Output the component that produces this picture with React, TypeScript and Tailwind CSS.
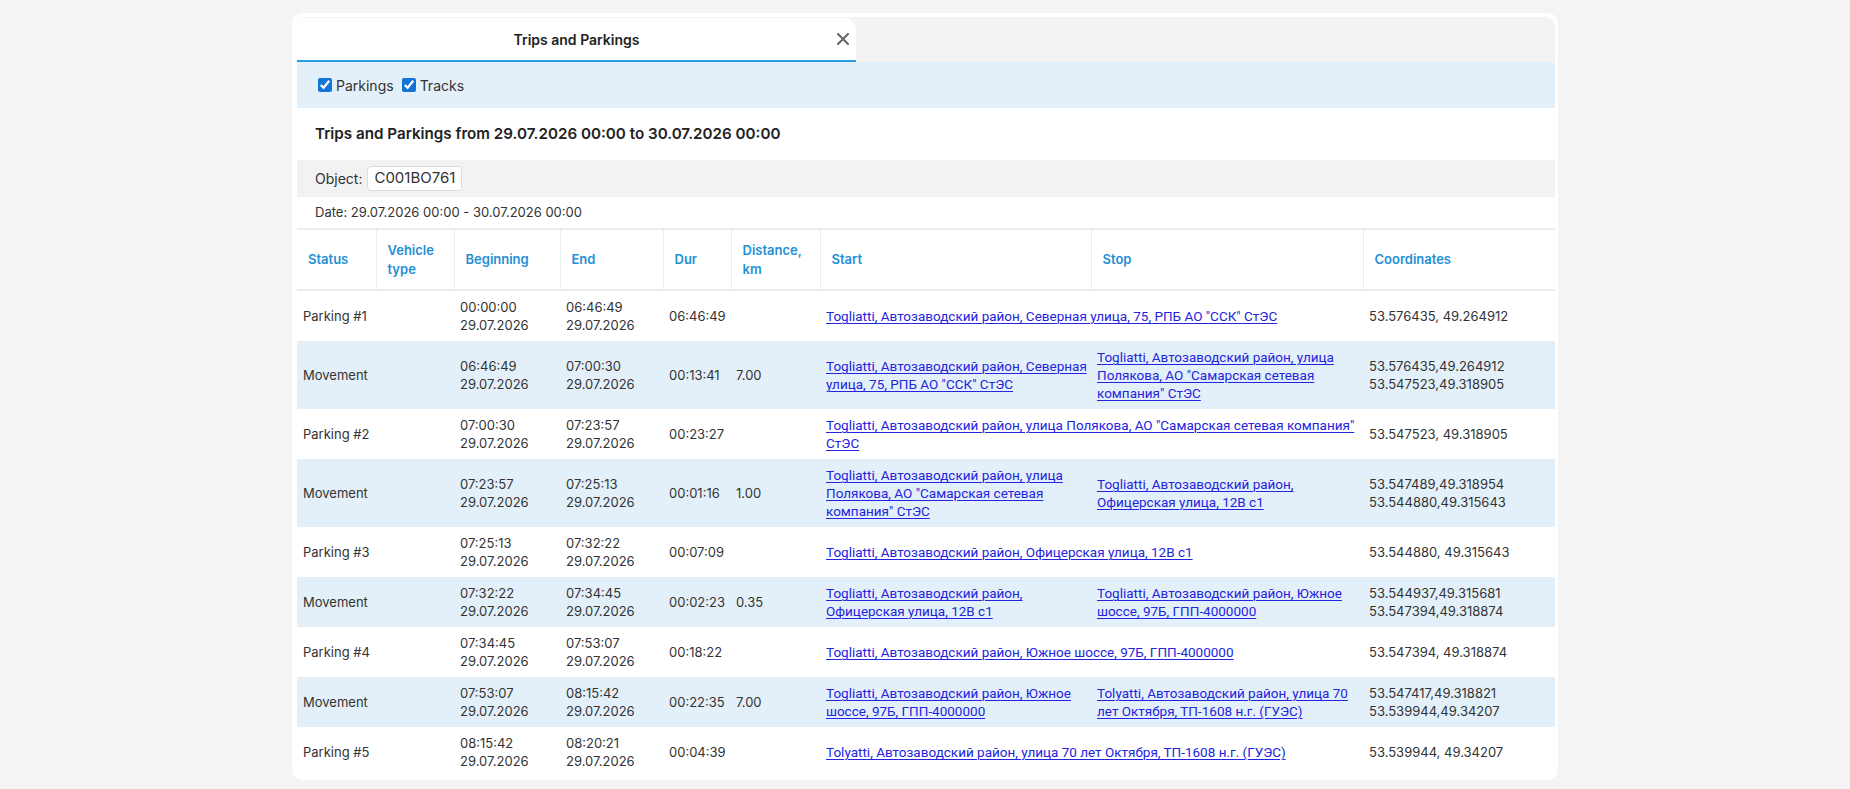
import React from "react";

type Row = {
  status: string;
  b1: string;
  e1: string;
  dur: string;
  dist?: string;
  start: string[];
  stop?: string[];
  coords: string[];
};

const D = "29.07.2026";

const rows: Row[] = [
  { status: "Parking #1", b1: "00:00:00", e1: "06:46:49", dur: "06:46:49", start: ['Togliatti, Автозаводский район, Северная улица, 75, РПБ АО "ССК" СтЭС'], coords: ["53.576435, 49.264912"] },
  { status: "Movement", b1: "06:46:49", e1: "07:00:30", dur: "00:13:41", dist: "7.00", start: ["Togliatti, Автозаводский район, Северная", 'улица, 75, РПБ АО "ССК" СтЭС'], stop: ["Togliatti, Автозаводский район, улица", 'Полякова, АО "Самарская сетевая', 'компания" СтЭС'], coords: ["53.576435,49.264912", "53.547523,49.318905"] },
  { status: "Parking #2", b1: "07:00:30", e1: "07:23:57", dur: "00:23:27", start: ['Togliatti, Автозаводский район, улица Полякова, АО "Самарская сетевая компания"', "СтЭС"], coords: ["53.547523, 49.318905"] },
  { status: "Movement", b1: "07:23:57", e1: "07:25:13", dur: "00:01:16", dist: "1.00", start: ["Togliatti, Автозаводский район, улица", 'Полякова, АО "Самарская сетевая', 'компания" СтЭС'], stop: ["Togliatti, Автозаводский район,", "Офицерская улица, 12В с1"], coords: ["53.547489,49.318954", "53.544880,49.315643"] },
  { status: "Parking #3", b1: "07:25:13", e1: "07:32:22", dur: "00:07:09", start: ["Togliatti, Автозаводский район, Офицерская улица, 12В с1"], coords: ["53.544880, 49.315643"] },
  { status: "Movement", b1: "07:32:22", e1: "07:34:45", dur: "00:02:23", dist: "0.35", start: ["Togliatti, Автозаводский район,", "Офицерская улица, 12В с1"], stop: ["Togliatti, Автозаводский район, Южное", "шоссе, 97Б, ГПП-4000000"], coords: ["53.544937,49.315681", "53.547394,49.318874"] },
  { status: "Parking #4", b1: "07:34:45", e1: "07:53:07", dur: "00:18:22", start: ["Togliatti, Автозаводский район, Южное шоссе, 97Б, ГПП-4000000"], coords: ["53.547394, 49.318874"] },
  { status: "Movement", b1: "07:53:07", e1: "08:15:42", dur: "00:22:35", dist: "7.00", start: ["Togliatti, Автозаводский район, Южное", "шоссе, 97Б, ГПП-4000000"], stop: ["Tolyatti, Автозаводский район, улица 70", "лет Октября, ТП-1608 н.г. (ГУЭС)"], coords: ["53.547417,49.318821", "53.539944,49.34207"] },
  { status: "Parking #5", b1: "08:15:42", e1: "08:20:21", dur: "00:04:39", start: ["Tolyatti, Автозаводский район, улица 70 лет Октября, ТП-1608 н.г. (ГУЭС)"], coords: ["53.539944, 49.34207"] },
];

const headers = ["Status", "Vehicle type", "Beginning", "End", "Dur", "Distance, km", "Start", "Stop", "Coordinates"];

function Link({ lines }: { lines: string[] }) {
  return (
    <div className="whitespace-nowrap [font-family:Roboto,'Liberation_Sans',sans-serif] text-[13.5px] leading-[18px]">
      <a href="#" className="text-[#2323e0] underline underline-offset-[2px] decoration-[1px]">
        {lines.map((l, i) => (
          <React.Fragment key={i}>
            {i > 0 && <br />}
            {l}
          </React.Fragment>
        ))}
      </a>
    </div>
  );
}

const td = "px-[6px] py-[7px] align-middle leading-[18px]";

export default function App() {
  return (
    <div className="min-h-[789px] w-full bg-[#f4f4f4] pt-[13px] [font-family:Inter,'Noto_Sans',sans-serif] text-[#333]">
      <div className="mx-auto w-[1266px] rounded-[10px] bg-white pl-[5px] pr-[3px] pt-[4px] pb-[3px]">
        {/* tab strip */}
        <div className="flex h-[45px] items-end rounded-tr-[10px] rounded-tl-[10px] bg-[#f3f3f3]">
          <div className="relative flex h-[44px] w-[559px] items-center justify-center rounded-tl-[10px] rounded-tr-[12px] border-b-2 border-[#2b9be0] bg-white">
            <span className="text-[14px] font-semibold text-[#222]">Trips and Parkings</span>
            <svg className="absolute right-[7px] top-[15px]" width="12" height="12" viewBox="0 0 12 12">
              <path d="M1 1 L11 11 M11 1 L1 11" stroke="#666" strokeWidth="2" strokeLinecap="round" />
            </svg>
          </div>
        </div>
        {/* checkbox bar */}
        <div className="flex h-[46px] items-center gap-[8px] bg-[#e3f0f9] pl-[21px] text-[14px]">
          <label className="flex items-center gap-[4px]">
            <input type="checkbox" defaultChecked className="m-0 h-[14px] w-[14px] accent-[#1473d6]" />
            <span>Parkings</span>
          </label>
          <label className="flex items-center gap-[4px]">
            <input type="checkbox" defaultChecked className="m-0 h-[14px] w-[14px] accent-[#1473d6]" />
            <span>Tracks</span>
          </label>
        </div>
        {/* title */}
        <div className="flex h-[52px] items-center pl-[18px] text-[15.2px] font-semibold text-[#222]">
          Trips and Parkings from 29.07.2026 00:00 to 30.07.2026 00:00
        </div>
        {/* object */}
        <div className="flex h-[37px] items-center gap-[5px] bg-[#f2f2f2] pl-[18px] text-[14px]">
          <span>Object:</span>
          <span className="flex h-[25px] items-center rounded-[4px] border border-[#dcdcdc] bg-white px-[6px] text-[15px]">C001BO761</span>
        </div>
        {/* date */}
        <div className="flex h-[31px] items-center pl-[18px] text-[13px]">Date: 29.07.2026 00:00 - 30.07.2026 00:00</div>
        {/* table */}
        <table className="w-[1258px] table-fixed border-collapse text-[13px]">
          <colgroup>
            <col className="w-[79px]" />
            <col className="w-[78px]" />
            <col className="w-[106px]" />
            <col className="w-[103px]" />
            <col className="w-[68px]" />
            <col className="w-[89px]" />
            <col className="w-[271px]" />
            <col className="w-[272px]" />
            <col className="w-[192px]" />
          </colgroup>
          <thead>
            <tr className="h-[61px] border-y-2 border-[#ececec]">
              {headers.map((h, i) => (
                <th
                  key={h}
                  className={`pl-[11px] pr-[6px] text-left align-middle text-[13px] font-semibold leading-[19px] text-[#1f8fd6] ${i < headers.length - 1 ? "border-r border-[#ececec]" : ""}`}
                >
                  {h}
                </th>
              ))}
            </tr>
          </thead>
          <tbody>
            {rows.map((r, idx) => {
              const mv = r.status === "Movement";
              return (
                <tr key={idx} className={mv ? "bg-[#e3f0f9]" : "bg-white"}>
                  <td className={td}>{r.status}</td>
                  <td className={td}></td>
                  <td className={td}>
                    <div>{r.b1}</div>
                    <div>{D}</div>
                  </td>
                  <td className={td}>
                    <div>{r.e1}</div>
                    <div>{D}</div>
                  </td>
                  <td className={td}>{r.dur}</td>
                  <td className="px-[5px] py-[7px] align-middle leading-[18px]">{r.dist ?? ""}</td>
                  {mv ? (
                    <>
                      <td className={td}>
                        <Link lines={r.start} />
                      </td>
                      <td className={td}>
                        <Link lines={r.stop!} />
                      </td>
                    </>
                  ) : (
                    <td colSpan={2} className={td}>
                      <Link lines={r.start} />
                    </td>
                  )}
                  <td className={td}>
                    {r.coords.map((c, j) => (
                      <div key={j}>{c}</div>
                    ))}
                  </td>
                </tr>
              );
            })}
          </tbody>
        </table>
      </div>
    </div>
  );
}
